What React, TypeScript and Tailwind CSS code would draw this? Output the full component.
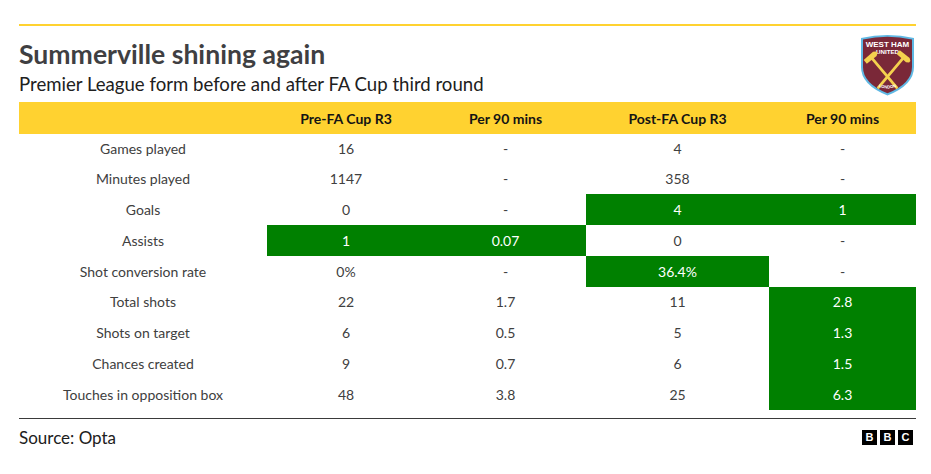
import React from "react";

type Cell = { v: string; g?: boolean };

const rows: { label: string; cells: Cell[] }[] = [
  { label: "Games played", cells: [{ v: "16" }, { v: "-" }, { v: "4" }, { v: "-" }] },
  { label: "Minutes played", cells: [{ v: "1147" }, { v: "-" }, { v: "358" }, { v: "-" }] },
  { label: "Goals", cells: [{ v: "0" }, { v: "-" }, { v: "4", g: true }, { v: "1", g: true }] },
  { label: "Assists", cells: [{ v: "1", g: true }, { v: "0.07", g: true }, { v: "0" }, { v: "-" }] },
  { label: "Shot conversion rate", cells: [{ v: "0%" }, { v: "-" }, { v: "36.4%", g: true }, { v: "-" }] },
  { label: "Total shots", cells: [{ v: "22" }, { v: "1.7" }, { v: "11" }, { v: "2.8", g: true }] },
  { label: "Shots on target", cells: [{ v: "6" }, { v: "0.5" }, { v: "5" }, { v: "1.3", g: true }] },
  { label: "Chances created", cells: [{ v: "9" }, { v: "0.7" }, { v: "6" }, { v: "1.5", g: true }] },
  { label: "Touches in opposition box", cells: [{ v: "48" }, { v: "3.8" }, { v: "25" }, { v: "6.3", g: true }] },
];

const headers = ["", "Pre-FA Cup R3", "Per 90 mins", "Post-FA Cup R3", "Per 90 mins"];

function Crest() {
  const hammer = (
    <g>
      <path d="M-7.5,-2.4 L5,-2.8 L7.5,-1 L7.5,1 L5,2.8 L-7.5,2.4 Z" fill="#f4d14e" />
      <rect x="-1.4" y="1" width="2.8" height="40" rx="1" fill="#f4d14e" />
    </g>
  );
  return (
    <svg width="55" height="63" viewBox="0 0 55 63">
      <path d="M1,5 Q27.5,-1 54,5 L54,34 Q54,52 27.5,62.5 Q1,52 1,34 Z" fill="#5fb8e4" />
      <path d="M3,6.6 Q27.5,1 52,6.6 L52,34 Q52,50.5 27.5,60.3 Q3,50.5 3,34 Z" fill="#7a2838" />
      <text x="27.5" y="14" textAnchor="middle" fontFamily="Liberation Sans, Arial, sans-serif" fontWeight="700" fontSize="8" fill="#ffffff">WEST HAM</text>
      <text x="27.5" y="20.5" textAnchor="middle" fontFamily="Liberation Sans, Arial, sans-serif" fontWeight="700" fontSize="6.2" fill="#ffffff">UNITED</text>
      <g transform="translate(11,24) rotate(-40)">{hammer}</g>
      <g transform="translate(44,24) rotate(40)">{hammer}</g>
      <path id="arc" d="M17,53 Q27.5,58 38,53" fill="none" />
      <text fontFamily="Liberation Sans, Arial, sans-serif" fontWeight="700" fontSize="4.2" fill="#ffffff">
        <textPath href="#arc" startOffset="50%" textAnchor="middle">LONDON</textPath>
      </text>
    </svg>
  );
}

export default function App() {
  return (
    <div className="w-[931px] h-[474px] bg-white overflow-hidden font-['Lato','Liberation_Sans',sans-serif]">
      <div className="mx-[19px] pt-[24px] w-[897px]">
        <div className="h-[2px] bg-[#ffd230]" />
        <div className="flex justify-between">
          <div>
            <h1 className="mt-[12px] text-[26.6px] leading-[32px] font-bold text-[#3f3f42]">Summerville shining again</h1>
            <p className="mt-[1px] text-[18.6px] leading-[26px] text-[#202020]">Premier League form before and after FA Cup third round</p>
          </div>
          <div className="mt-[7px] mr-[1px]">
            <Crest />
          </div>
        </div>
        <div className="mt-[5px] grid grid-cols-[248px_158px_161px_183px_147px] auto-rows-[30.78px] text-[14px] text-[#404040]">
          {headers.map((h, i) => (
            <div key={i} className="h-[32px] bg-[#ffd230] flex items-center justify-center font-bold text-[#141414]">
              {h}
            </div>
          ))}
          {rows.map((r) => (
            <React.Fragment key={r.label}>
              <div className="flex items-center justify-center">{r.label}</div>
              {r.cells.map((c, j) => (
                <div
                  key={j}
                  className={
                    c.g
                      ? "flex items-center justify-center bg-[#008000] text-white"
                      : "flex items-center justify-center"
                  }
                >
                  {c.v}
                </div>
              ))}
            </React.Fragment>
          ))}
        </div>
        <div className="mt-[8px] h-[1px] bg-[#3a3a3a]" />
        <div className="flex justify-between items-center mt-[8px]">
          <span className="text-[17px] leading-[22px] text-[#202020]">Source: Opta</span>
          <div className="flex gap-[3px] mr-[3px]">
            {["B", "B", "C"].map((l, i) => (
              <div key={i} className="w-[15px] h-[15px] bg-black text-white flex items-center justify-center text-[11px] font-bold leading-none font-['Liberation_Sans',sans-serif]">
                {l}
              </div>
            ))}
          </div>
        </div>
      </div>
    </div>
  );
}
